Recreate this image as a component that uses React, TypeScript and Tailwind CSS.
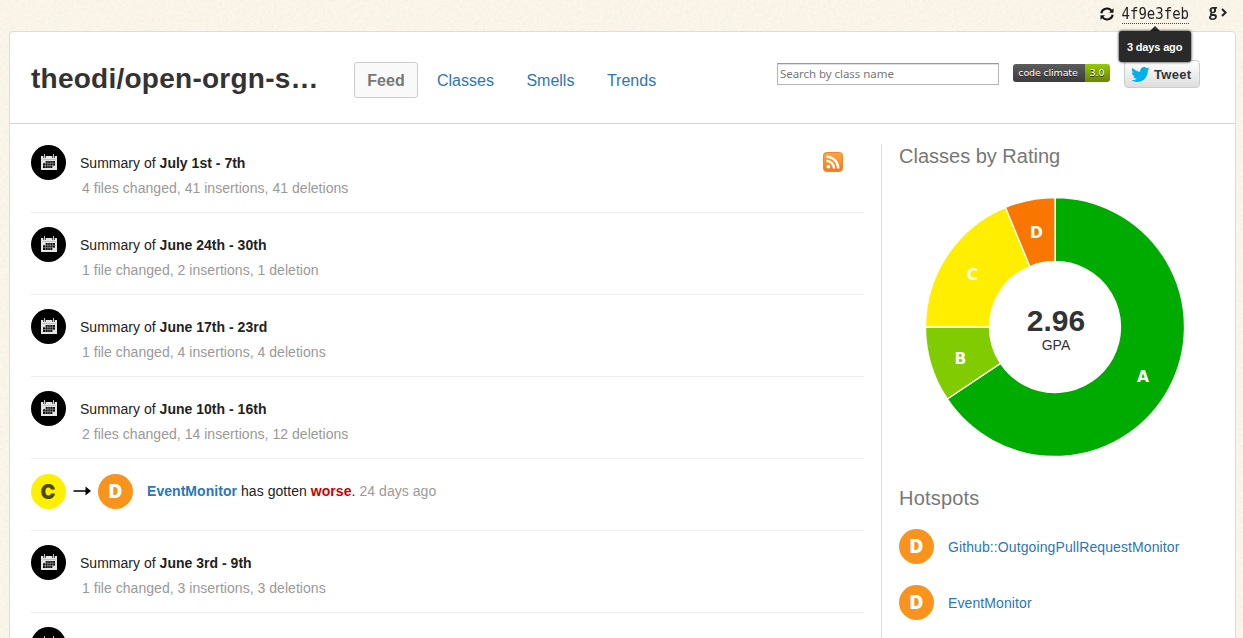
import React from "react";

const sans = "font-['Liberation_Sans',Arial,sans-serif]";

function CalendarIcon() {
  return (
    <span className="flex size-[35px] shrink-0 items-center justify-center rounded-full bg-black">
      <svg width="16" height="16" viewBox="0 0 16 16" className="mb-px ml-px">
        <path d="M0 2H16V16H0Z" fill="#e6e6e6" />
        <path d="M2 2H5V4H2ZM11 2H14V4H11Z" fill="#555" />
        <path d="M3 0H4V4H3ZM12 0H13V4H12Z" fill="#c4c4c4" />
        <path d="M1.500 5H14.500V5.500H1.500Z" fill="#999" />
        <path d="M4.500 7H14V12H11.500V14H2V9H4.500Z" fill="#111" />
        <path d="M2 9.200H14M2 11.600H14M4.500 7V14M6.900 7V14M9.200 7V14M11.600 7V14" stroke="#bbb" strokeWidth="0.500" />
      </svg>
    </span>
  );
}

function Grade({ letter }: { letter: "C" | "D" }) {
  return (
    <span
      className={
        "flex size-[35px] shrink-0 items-center justify-center rounded-full font-['Inter',sans-serif] font-black leading-none " +
        (letter === "C" ? "bg-[#fff000] pr-px text-[20px] text-[#4d4a00]" : "bg-[#f8941d] text-[18.5px] text-white")
      }
    >
      {letter}
    </span>
  );
}

function Summary({ range, stats }: { range: string; stats: string }) {
  return (
    <li className="flex h-[82px] shrink-0 gap-[14px] border-b border-[#eee] pt-[14px]">
      <CalendarIcon />
      <div className="pt-[8px] text-[14px] leading-[20px] text-[#222]">
        <p className="tracking-[0.02px]">
          Summary of <strong>{range}</strong>
        </p>
        <p className="pt-[5px] pl-[2px] tracking-[0.04px] text-[#999]">{stats}</p>
      </div>
    </li>
  );
}

const slices = [
  { id: "A", from: 0, to: 21, color: "#00ab00", x: 1143, y: 382 },
  { id: "B", from: 21, to: 24, color: "#80cc00", x: 960.5, y: 364 },
  { id: "C", from: 24, to: 30, color: "#ffee00", x: 972.5, y: 280 },
  { id: "D", from: 30, to: 32, color: "#f97700", x: 1036.5, y: 238 },
];

function arc(from: number, to: number) {
  const p = (n: number, r: number) => {
    const a = (n / 32) * Math.PI * 2;
    return `${130 + r * Math.sin(a)} ${130 - r * Math.cos(a)}`;
  };
  const big = to - from > 16 ? 1 : 0;
  return `M${p(from, 129.5)}A129.5 129.5 0 ${big} 1 ${p(to, 129.5)}L${p(to, 65.5)}A65.5 65.5 0 ${big} 0 ${p(from, 65.5)}Z`;
}

function Donut() {
  return (
    <svg width="260" height="260" viewBox="0 0 260 260" className="block">
      {slices.map((s) => (
        <path key={s.id} d={arc(s.from, s.to)} fill={s.color} stroke="#fff" strokeWidth="1.3" />
      ))}
      {slices.map((s) => (
        <text key={s.id} x={s.x - 925} y={s.y - 197} textAnchor="middle" fill="#fff" className="font-['DejaVu_Sans',sans-serif] text-[15.5px] font-bold">
          {s.id}
        </text>
      ))}
      <text x="131" y="134" textAnchor="middle" fill="#333" className="font-['Liberation_Sans',sans-serif] text-[30px] font-bold">
        2.96
      </text>
      <text x="131" y="153" textAnchor="middle" fill="#333" className="font-['Liberation_Sans',sans-serif] text-[14px]">
        GPA
      </text>
    </svg>
  );
}

function TopBar() {
  return (
    <div className="flex h-[31px] shrink-0 justify-end pr-[16px] text-[#222]">
      <svg width="14" height="14" viewBox="0 0 14 14" className="mt-[7px]" fill="none" stroke="#111" strokeWidth="2">
        <path d="M1.300 6.200A5.800 5.600 0 0 1 11.500 3.600" />
        <path d="M12.700 7.800A5.800 5.600 0 0 1 2.500 10.400" />
        <path d="M13.500 1.200V5.800H9Z" fill="#111" stroke="none" />
        <path d="M0.500 12.800V8.200H5Z" fill="#111" stroke="none" />
      </svg>
      <div className="relative ml-[8px] mt-[5px] h-[19px] border-b border-dotted border-[#444]">
        <span className="block origin-bottom scale-y-[1.12] font-['DejaVu_Sans_Mono',monospace] text-[14px] leading-[18px]">4f9e3feb</span>
        <div className="absolute left-[-3px] top-[21px] z-10 flex w-[72px] flex-col items-center">
          <span className="h-0 w-0 border-x-[5px] border-b-[5px] border-x-transparent border-b-[#2a2a2a]" />
          <span className="h-[31px] w-[72px] rounded-[3px] bg-[#2a2a2a] text-center text-[11px] font-bold leading-[32px] tracking-[-0.15px] text-white shadow-[0_0_3px_#000]">
            3 days ago
          </span>
        </div>
      </div>
      <span className="ml-[20px] flex h-[20px] items-center font-['Open_Sans',sans-serif] text-[16px] font-bold leading-[20px]">
        <span className="w-[9px] origin-left scale-x-90">g</span>
        <svg width="6" height="9" viewBox="0 0 6 9" className="ml-[3px] mt-[4px]" fill="none" stroke="#222" strokeWidth="2">
          <path d="M1 1L4.6 4.5L1 8" />
        </svg>
      </span>
    </div>
  );
}

function Header() {
  return (
    <header className="flex h-[92px] shrink-0 items-start border-b border-[#d5d5d5] pl-[21px]">
      <h1 className="mt-[29px] w-[323px] text-[28px] font-bold leading-[36px] tracking-[0.25px] text-[#333]">theodi/open-orgn-s…</h1>
      <nav className="mt-[30px] flex text-[16px] leading-[34px] text-[#2a76b9]">
        <a className="h-[36px] w-[64px] rounded-[3px] border border-[#ccc] bg-[#f9f9f9] pt-px text-center font-bold text-[#777]">Feed</a>
        <a className="ml-[19px] pt-[2px]">Classes</a>
        <a className="ml-[32.500px] pt-[2px]">Smells</a>
        <a className="ml-[32.500px] pt-[2px]">Trends</a>
      </nav>
      <div className="ml-auto flex pr-[35px]">
        <input
          placeholder="Search by class name"
          className="mt-[31px] h-[22px] w-[222px] border border-[#b5b5b5] border-t-[#999] bg-white px-[2px] pb-[2px] font-['Noto_Sans',sans-serif] text-[11.5px] tracking-[-0.05px] shadow-[inset_0_1px_1px_#ddd] placeholder:text-[#777]"
        />
        <div className="ml-[14px] mt-[32px] flex h-[18px] w-[97px] overflow-hidden rounded-[3px] text-center font-['DejaVu_Sans',sans-serif] text-[9.5px] leading-[17px] text-white [text-shadow:0_1px_0_#222]">
          <span className="w-[72px] bg-linear-to-b from-[#5c5c5c] to-[#3c3c3c] pr-[2px] tracking-[-0.15px]">code climate</span>
          <span className="flex-1 bg-linear-to-b from-[#97ca00] to-[#648800] pr-px">3.0</span>
        </div>
        <a className="ml-[14px] mt-[28px] flex h-[28px] w-[76px] items-center rounded-[4px] border border-[#ccc] bg-linear-to-b from-white to-[#dedede] pl-[6px] pt-px text-[13px] font-bold tracking-[0.3px] text-[#333]">
          <svg width="19" height="15" viewBox="0 0 24 19.5" fill="#00b0ed" className="mr-[4px]">
            <path d="M24 2.3a9.8 9.8 0 0 1-2.8.8 5 5 0 0 0 2.1-2.7 9.9 9.9 0 0 1-3.1 1.2 4.9 4.9 0 0 0-8.4 4.5A14 14 0 0 1 1.7.9a4.9 4.9 0 0 0 1.5 6.6A4.9 4.9 0 0 1 1 6.9a4.9 4.9 0 0 0 3.9 4.9 5 5 0 0 1-2.2.1 4.9 4.9 0 0 0 4.6 3.4A9.9 9.9 0 0 1 0 17.300a13.900 13.900 0 0 0 7.500 2.200c9.100 0 14-7.500 14-14v-.600A10 10 0 0 0 24 2.300z" />
          </svg>
          Tweet
        </a>
      </div>
    </header>
  );
}

function Feed() {
  return (
    <ul className="relative flex w-[833px] shrink-0 flex-col pt-[7px]">
      <svg width="20" height="20" viewBox="0 0 20 20" className="absolute left-[792px] top-[28px]">
        <defs>
          <linearGradient id="rss" x1="0" y1="0" x2="0" y2="1">
            <stop offset="0" stopColor="#f9a742" />
            <stop offset="1" stopColor="#f47a20" />
          </linearGradient>
        </defs>
        <rect x="0.5" y="0.5" width="19" height="19" rx="3" fill="url(#rss)" stroke="#f4852c" />
        <circle cx="5.4" cy="14.6" r="1.9" fill="#fff" />
        <path d="M3.500 8.900A7.600 7.600 0 0 1 11.100 16.500M3.500 4.700A11.800 11.800 0 0 1 15.300 16.500" fill="none" stroke="#fff" strokeWidth="2.400" />
      </svg>
      <Summary range="July 1st - 7th" stats="4 files changed, 41 insertions, 41 deletions" />
      <Summary range="June 24th - 30th" stats="1 file changed, 2 insertions, 1 deletion" />
      <Summary range="June 17th - 23rd" stats="1 file changed, 4 insertions, 4 deletions" />
      <Summary range="June 10th - 16th" stats="2 files changed, 14 insertions, 12 deletions" />
      <li className="flex h-[72px] shrink-0 border-b border-[#eee] pt-[15px] text-[14px] leading-[34px] text-[#222]">
        <Grade letter="C" />
        <svg width="18" height="10" viewBox="0 0 18 10" className="mx-[7px] mt-[12px]">
          <path d="M0.500 5H13" stroke="#000" strokeWidth="1.500" />
          <path d="M12.500 0.500L18 5L12.500 9.500Z" fill="#000" />
        </svg>
        <Grade letter="D" />
        <p className="ml-[14px] whitespace-pre tracking-[0.05px]">
          <strong className="text-[#2a76b9]">EventMonitor</strong> has gotten <strong className="text-[#c00]">worse</strong>.{" "}
          <span className="text-[#999]">24 days ago</span>
        </p>
      </li>
      <Summary range="June 3rd - 9th" stats="1 file changed, 3 insertions, 3 deletions" />
      <li className="flex h-[82px] shrink-0 pt-[14px]">
        <CalendarIcon />
      </li>
    </ul>
  );
}

function Sidebar() {
  return (
    <aside className="ml-[17px] mt-[20px] flex-1 border-l border-[#ddd] pl-[17px]">
      <h2 className="text-[20px] leading-[24px] text-[#777]">Classes by Rating</h2>
      <div className="pl-[26px] pt-[29px]">
        <Donut />
      </div>
      <h2 className="pt-[29px] text-[20px] leading-[24px] tracking-[0.2px] text-[#777]">Hotspots</h2>
      {["Github::OutgoingPullRequestMonitor", "EventMonitor"].map((name) => (
        <div key={name} className="mb-[-1px] flex h-[57px] items-start gap-[14px] pt-[19px] text-[14px] leading-[37px] tracking-[0.1px] text-[#2a76b9]">
          <Grade letter="D" />
          <a>{name}</a>
        </div>
      ))}
    </aside>
  );
}

export default function App() {
  return (
    <div className={"relative isolate flex h-[638px] w-[1243px] flex-col overflow-hidden bg-[#fbf6eb] " + sans}>
      <svg className="absolute inset-0 -z-10 size-full opacity-10">
        <filter id="paper">
          <feTurbulence type="fractalNoise" baseFrequency="0.35" numOctaves="3" />
          <feColorMatrix values="0 0 0 0 0.6  0 0 0 0 0.5  0 0 0 0 0.3  1.600 0 0 0 -0.500" />
        </filter>
        <rect width="100%" height="100%" filter="url(#paper)" />
      </svg>
      <TopBar />
      <main className="ml-[9px] flex h-[700px] w-[1227px] shrink-0 flex-col rounded-t-[4px] border border-[#ddd] bg-white">
        <Header />
        <div className="flex min-h-0 flex-1 pl-[21px]">
          <Feed />
          <Sidebar />
        </div>
      </main>
    </div>
  );
}
